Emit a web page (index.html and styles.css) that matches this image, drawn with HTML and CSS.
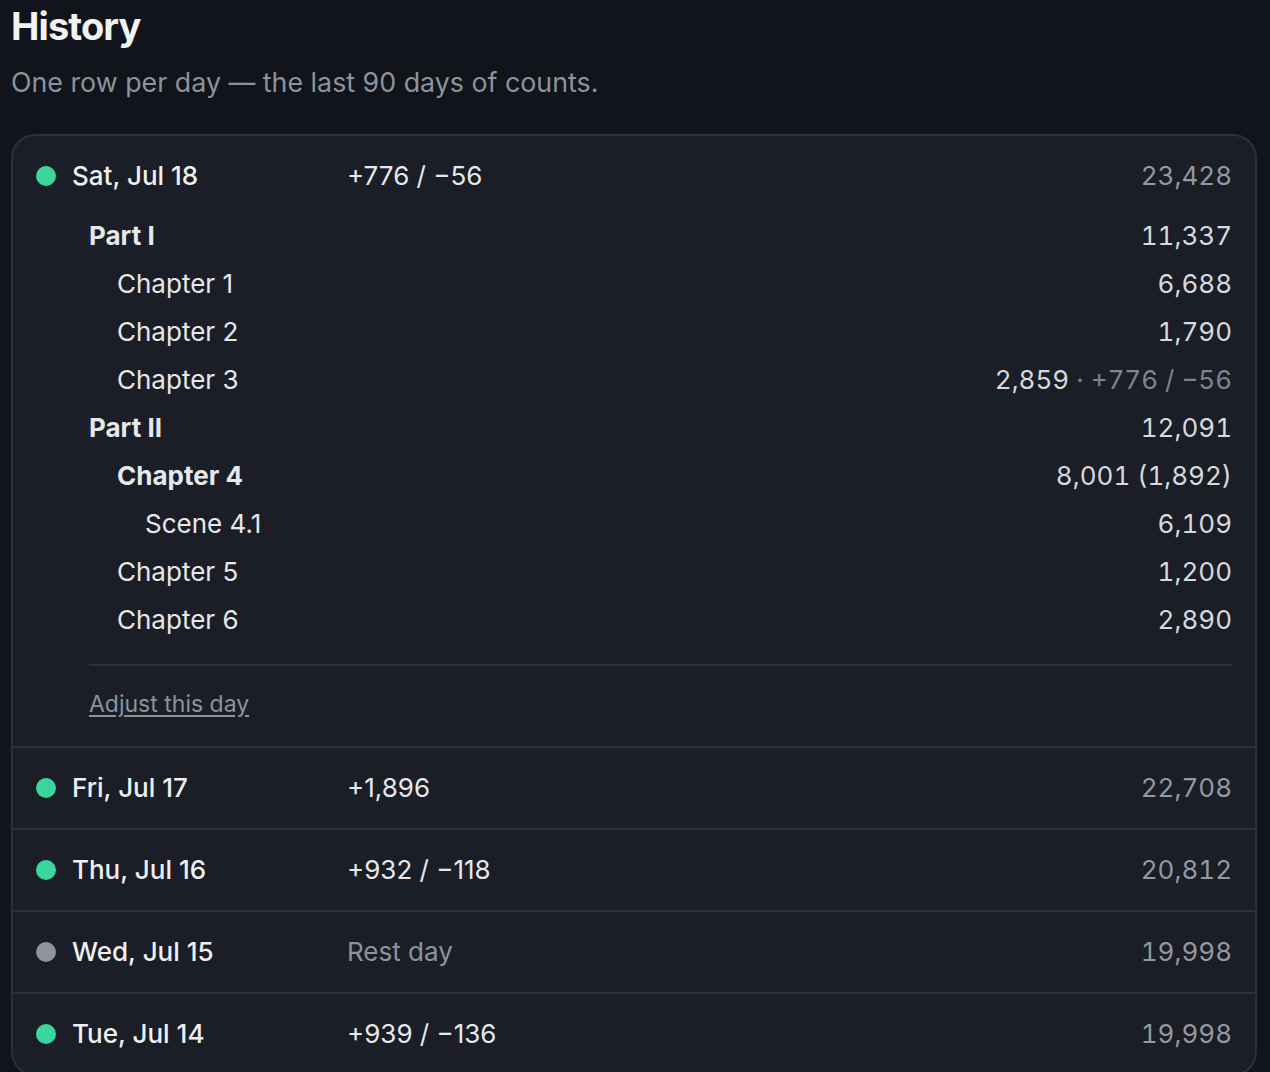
FILE: index.html
```html
<!DOCTYPE html>
<html lang="en">

<head>
    <meta charset="UTF-8">
    <title>History</title>
    <meta name="viewport" content="width=device-width, initial-scale=1.0" />
    <link rel="stylesheet" href="styles.css">
</head>

<body>
    <div class="page">
        <h1>History</h1>
        <p class="lead">One row per day — the last 90 days of counts.</p>

        <div class="days">
            <div class="day open">
                <div class="day-row">
                    <span class="dot"></span>
                    <span class="date">Sat, Jul 18</span>
                    <span class="delta">+776 / −56</span>
                    <span class="total">23,428</span>
                </div>

                <div class="details">
                    <ul class="tree">
                        <li class="node strong lvl-0"><span>Part I</span><span class="num">11,337</span></li>
                        <li class="node lvl-1"><span>Chapter 1</span><span class="num">6,688</span></li>
                        <li class="node lvl-1"><span>Chapter 2</span><span class="num">1,790</span></li>
                        <li class="node lvl-1"><span>Chapter 3</span><span class="num">2,859<span class="change"> · +776 / −56</span></span></li>
                        <li class="node strong lvl-0"><span>Part II</span><span class="num">12,091</span></li>
                        <li class="node strong lvl-1"><span>Chapter 4</span><span class="num">8,001 (1,892)</span></li>
                        <li class="node lvl-2"><span>Scene 4.1</span><span class="num">6,109</span></li>
                        <li class="node lvl-1"><span>Chapter 5</span><span class="num">1,200</span></li>
                        <li class="node lvl-1"><span>Chapter 6</span><span class="num">2,890</span></li>
                    </ul>
                    <div class="adjust">
                        <a href="#">Adjust this day</a>
                    </div>
                </div>
            </div>

            <div class="day">
                <div class="day-row">
                    <span class="dot"></span>
                    <span class="date">Fri, Jul 17</span>
                    <span class="delta">+1,896</span>
                    <span class="total">22,708</span>
                </div>
            </div>

            <div class="day">
                <div class="day-row">
                    <span class="dot"></span>
                    <span class="date">Thu, Jul 16</span>
                    <span class="delta">+932 / −118</span>
                    <span class="total">20,812</span>
                </div>
            </div>

            <div class="day">
                <div class="day-row">
                    <span class="dot rest"></span>
                    <span class="date">Wed, Jul 15</span>
                    <span class="delta muted">Rest day</span>
                    <span class="total">19,998</span>
                </div>
            </div>

            <div class="day">
                <div class="day-row">
                    <span class="dot"></span>
                    <span class="date">Tue, Jul 14</span>
                    <span class="delta">+939 / −136</span>
                    <span class="total">19,998</span>
                </div>
            </div>
        </div>
    </div>
</body>

</html>
```

FILE: styles.css
```css
* {
    margin: 0;
    padding: 0;
    box-sizing: border-box;
}

body {
    font-family: Inter, "Noto Sans", sans-serif;
    background: #11141b;
    color: #eceef1;
}

.page {
    padding: 2px 13px 0 11px;
}

h1 {
    font-size: 38px;
    line-height: 48px;
    font-weight: 700;
    letter-spacing: -0.9px;
    color: #f1f2f4;
}

.lead {
    margin-top: 12px;
    font-size: 26.8px;
    line-height: 40px;
    color: #8d929b;
}

.days {
    margin-top: 32px;
    background: #1b1e26;
    border: 2px solid #2c3038;
    border-radius: 24px;
    overflow: hidden;
}

.day {
    padding: 20px 23px;
    border-top: 2px solid #2c3038;
}

.day:first-child {
    border-top: none;
}

.day.open {
    padding-bottom: 22px;
}

.day-row {
    display: grid;
    grid-template-columns: 20px 259px 1fr auto;
    column-gap: 16px;
    align-items: center;
    font-size: 26px;
    line-height: 40px;
}

.dot {
    width: 20px;
    height: 20px;
    border-radius: 50%;
    background: #3ad69b;
}

.dot.rest {
    background: #8f939b;
}

.date {
    font-weight: 500;
    color: #eef0f3;
}

.delta {
    color: #e6e8ec;
}

.delta.muted {
    color: #8d929b;
}

.total {
    color: #9398a1;
    font-variant-numeric: tabular-nums;
}

.details {
    margin: 16px 0 0 53px;
}

.tree {
    list-style: none;
    padding-bottom: 20px;
    border-bottom: 2px solid #2c3038;
}

.node {
    display: flex;
    justify-content: space-between;
    font-size: 26px;
    line-height: 48px;
    color: #e6e8ec;
}

.node.strong > span:first-child {
    font-weight: 700;
}

.lvl-1 {
    padding-left: 28px;
}

.lvl-2 {
    padding-left: 56px;
}

.num {
    color: #d6d9de;
    font-variant-numeric: tabular-nums;
}

.change {
    color: #7e838c;
}

.adjust {
    padding-top: 18px;
    font-size: 23px;
    line-height: 40px;
}

.adjust a {
    color: #8d929b;
    text-decoration: underline;
    text-underline-offset: 3px;
}
```
